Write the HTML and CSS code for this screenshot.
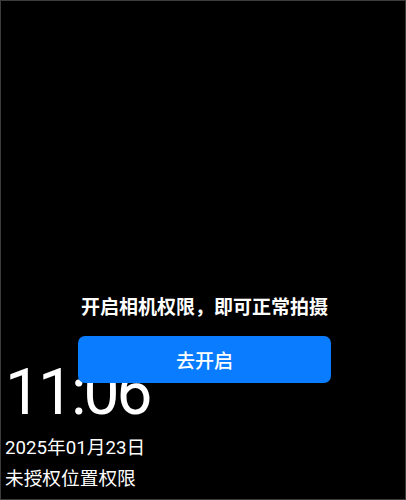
FILE: index.html
```html
<!DOCTYPE html>
<html lang="zh-CN">
<head>
<meta charset="utf-8">
<link rel="stylesheet" href="styles.css">
</head>
<body>
<div class="screen">
  <div class="info">
    <div class="time">11:06</div>
    <div class="date">2025年01月23日</div>
    <div class="loc">未授权位置权限</div>
  </div>
  <div class="prompt">
    <div class="prompt-title">开启相机权限，即可正常拍摄</div>
    <button class="prompt-btn">去开启</button>
  </div>
</div>
</body>
</html>
```

FILE: styles.css
```css
* { box-sizing: border-box; }
html, body { margin: 0; padding: 0; background: #000; }
.screen {
  position: relative;
  width: 406px;
  height: 500px;
  background: #000;
  border: 1px solid #3c3c3c;
  display: flex;
  flex-direction: column;
  justify-content: flex-end;
  color: #fff;
  font-family: Roboto, "Noto Sans CJK SC", sans-serif;
  overflow: hidden;
}
.info {
  display: flex;
  flex-direction: column;
  padding: 0 0 4px 4px;
}
.time {
  font-size: 64px;
  font-weight: 400;
  line-height: 64px;
  letter-spacing: -3px;
  margin-bottom: 8px;
}
.date, .loc {
  font-size: 18.7px;
  line-height: 31px;
}
.prompt {
  position: absolute;
  left: 77px;
  top: 292px;
  width: 253px;
  display: flex;
  flex-direction: column;
  align-items: center;
  gap: 17px;
}
.prompt-title {
  font-family: "Noto Sans CJK SC", sans-serif;
  font-size: 19px;
  font-weight: 700;
  line-height: 26px;
  white-space: nowrap;
}
.prompt-btn {
  width: 253px;
  height: 47px;
  border: none;
  border-radius: 7px;
  background: #0a7cff;
  color: #fff;
  font-family: "Noto Sans CJK SC", sans-serif;
  font-size: 19px;
  font-weight: 500;
  padding: 0;
}
```
